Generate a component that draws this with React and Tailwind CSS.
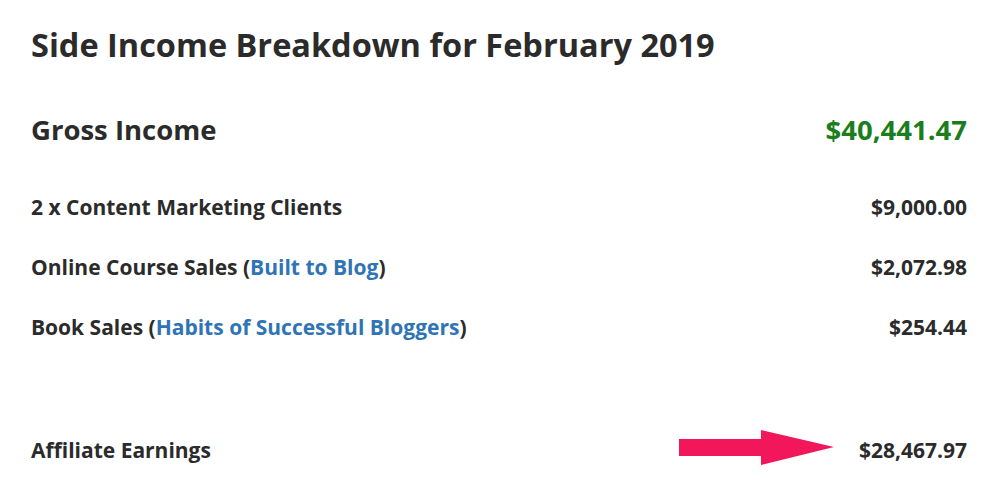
import React from 'react';

const rows = [
  { label: '2 x Content Marketing Clients', amount: '$9,000.00' },
  { label: 'Online Course Sales (', link: 'Built to Blog', after: ')', amount: '$2,072.98' },
  { label: 'Book Sales (', link: 'Habits of Successful Bloggers', after: ')', amount: '$254.44' },
];

const Arrow = () => (
  <svg width="156" height="36" viewBox="0 0 156 36" className="block -mt-[6px]">
    <path d="M0 9 H82 V0 L155 17 L82 35 V26 H0 Z" fill="#f2175b" />
  </svg>
);

export default function App() {
  return (
    <div
      className="w-[990px] h-[499px] bg-white text-[#2b2b2b] pl-[31px] pr-[23px] pt-[22px]"
      style={{ fontFamily: '"Open Sans", "Noto Sans", sans-serif' }}
    >
      <h1 className="text-[32.5px] font-bold leading-[46px]">
        Side Income Breakdown for February 2019
      </h1>

      <div className="flex items-center justify-between mt-[42px] h-[40px]">
        <span className="text-[27.5px] font-bold">Gross Income</span>
        <span className="text-[27.5px] font-bold text-[#1b7d1b]">$40,441.47</span>
      </div>

      <div className="flex flex-col mt-[44px] gap-[33px]">
        {rows.map((r) => (
          <div key={r.amount} className="flex items-center justify-between h-[27px] text-[21px] font-bold">
            <span>
              {r.label}
              {r.link && <span className="text-[#2f74b5]">{r.link}</span>}
              {r.after}
            </span>
            <span>{r.amount}</span>
          </div>
        ))}
      </div>

      <div className="flex items-center justify-between mt-[92px] h-[36px] text-[21px] font-bold">
        <span>Affiliate Earnings</span>
        <div className="flex items-center gap-[24px]">
          <Arrow />
          <span>$28,467.97</span>
        </div>
      </div>
    </div>
  );
}
